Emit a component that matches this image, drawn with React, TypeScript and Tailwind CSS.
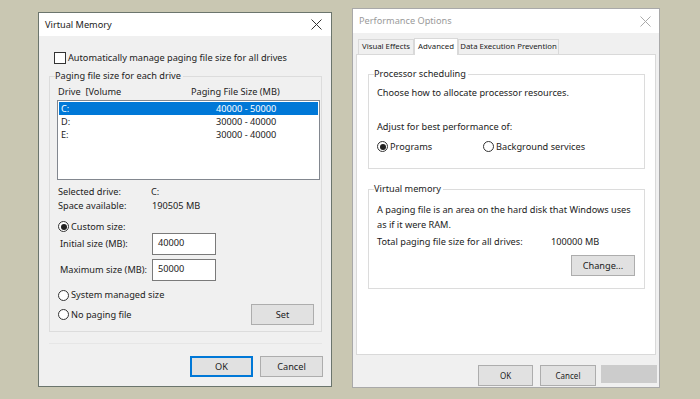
import React from 'react'

const font = { fontFamily: '"Segoe UI", "Noto Sans", "Liberation Sans", sans-serif' }

function Radio({ checked }: { checked?: boolean }) {
  return (
    <span className="w-[11px] h-[11px] rounded-full border border-[#333] bg-white flex items-center justify-center shrink-0">
      {checked && <span className="w-[6px] h-[6px] rounded-full bg-[#222]" />}
    </span>
  )
}

function Button({ label, primary, className = '' }: { label: string; primary?: boolean; className?: string }) {
  return (
    <div
      className={`h-[21px] flex items-center justify-center bg-[#e1e1e1] border ${
        primary ? 'border-[#0078d7] border-2' : 'border-[#adadad]'
      } ${className}`}
    >
      {label}
    </div>
  )
}

function CloseX({ color }: { color: string }) {
  return (
    <svg width="11" height="11" viewBox="0 0 11 11">
      <path d="M0.5 0.5 L10.5 10.5 M10.5 0.5 L0.5 10.5" stroke={color} strokeWidth="1" />
    </svg>
  )
}

const drives = [
  { d: 'C:', size: '40000 - 50000', sel: true },
  { d: 'D:', size: '30000 - 40000' },
  { d: 'E:', size: '30000 - 40000' },
]

function VirtualMemory() {
  return (
    <div className="absolute left-[38px] top-[12px] w-[294px] h-[375px] border border-[#6b756d] bg-[#f0f0f0] flex flex-col">
      {/* Title */}
      <div className="h-[23px] bg-white flex items-center justify-between pl-[6px] pr-[9px] shrink-0">
        <span>Virtual Memory</span>
        <CloseX color="#333" />
      </div>

      <div className="pl-[10px] pr-[9px]">
        {/* Checkbox */}
        <div className="flex items-center gap-[2px] mt-[15px] ml-[5px] h-[13px]">
          <span className="w-[12px] h-[12px] border border-[#333] bg-white shrink-0" />
          <span>Automatically manage paging file size for all drives</span>
        </div>

        {/* Group */}
        <div className="relative mt-[12px] h-[256px] border border-[#dcdcdc] pl-[7px] pr-[1px]">
          <span className="absolute -top-[6px] left-[5px] bg-[#f0f0f0] pr-[2px]">Paging file size for each drive</span>

          <div className="flex h-[12px] items-center mt-[9px] pl-[1px]">
            <span className="w-[133px]">Drive&nbsp; [Volume</span>
            <span>Paging File Size (MB)</span>
          </div>

          <div className="mt-[2px] h-[80px] border border-[#82878f] bg-white pt-[1px] px-[1px]">
            {drives.map((r) => (
              <div
                key={r.d}
                className={`h-[13px] flex items-center pl-[2px] ${r.sel ? 'bg-[#0078d7] text-white' : ''}`}
              >
                <span className="w-[155px]">{r.d}</span>
                <span>{r.size}</span>
              </div>
            ))}
          </div>

          <div className="mt-[5px] pl-[1px]">
            <div className="flex h-[14px] items-center">
              <span className="w-[93px]">Selected drive:</span>
              <span>C:</span>
            </div>
            <div className="flex h-[14px] items-center">
              <span className="w-[94px]">Space available:</span>
              <span>190505 MB</span>
            </div>

            <div className="flex items-center gap-[2px] h-[13px] mt-[7px]">
              <Radio checked />
              <span>Custom size:</span>
            </div>

            <div className="flex items-center h-[22px]">
              <span className="w-[94px] pl-[2px]">Initial size (MB):</span>
              <div className="w-[64px] h-[22px] border border-[#7a7a7a] bg-white pl-[5px] pt-[4px]">40000</div>
            </div>
            <div className="flex items-center h-[22px] mt-[4px]">
              <span className="w-[94px] pl-[2px]">Maximum size (MB):</span>
              <div className="w-[64px] h-[22px] border border-[#7a7a7a] bg-white pl-[5px] pt-[4px]">50000</div>
            </div>

            <div className="flex items-center gap-[2px] h-[14px] mt-[7px]">
              <Radio />
              <span>System managed size</span>
            </div>
            <div className="flex items-center justify-between h-[21px] mt-[2px] pr-[6px]">
              <div className="flex items-center gap-[2px]">
                <Radio />
                <span>No paging file</span>
              </div>
              <Button label="Set" className="w-[63px]" />
            </div>
          </div>
        </div>

        <div className="mt-[11px] border-t border-[#e6e6e6]" />

        <div className="flex justify-end gap-[7px] mt-[12px] -mr-[1px]">
          <Button label="OK" primary className="w-[63px]" />
          <Button label="Cancel" className="w-[63px]" />
        </div>
      </div>
    </div>
  )
}

function PerformanceOptions() {
  return (
    <div className="absolute left-[352px] top-[8px] w-[308px] h-[380px] border border-[#a9a9a9] bg-[#f0f0f0] flex flex-col">
      <div className="h-[24px] bg-white flex items-center justify-between pl-[6px] pr-[8px] shrink-0">
        <span className="text-[#9a9a9a]">Performance Options</span>
        <CloseX color="#aaa" />
      </div>

      <div className="px-[3px] pt-[4px]">
        {/* Tabs */}
        <div className="flex items-end h-[17px] pl-[2px] text-[7.8px]">
          <div className="w-[56px] h-[15px] flex items-center justify-center border border-[#d9d9d9] border-b-0 bg-[#f0f0f0]">Visual Effects</div>
          <div className="w-[44px] h-[17px] flex items-center justify-center border border-[#d9d9d9] border-b-0 bg-white relative top-[1px]">Advanced</div>
          <div className="w-[101px] h-[15px] flex items-center justify-center border border-[#d9d9d9] border-b-0 bg-[#f0f0f0]">Data Execution Prevention</div>
        </div>

        {/* Panel */}
        <div className="h-[301px] border border-[#d9d9d9] bg-white pl-[11px] pr-[10px] pt-[19px]">
          <div className="relative h-[95px] border border-[#dcdcdc] pl-[8px]">
            <span className="absolute -top-[6px] left-[5px] bg-white pr-[2px]">Processor scheduling</span>
            <div className="mt-[13px]">Choose how to allocate processor resources.</div>
            <div className="mt-[25px]">Adjust for best performance of:</div>
            <div className="flex items-center mt-[10px]">
              <div className="flex items-center gap-[2px] w-[106px]">
                <Radio checked />
                <span>Programs</span>
              </div>
              <div className="flex items-center gap-[2px]">
                <Radio />
                <span>Background services</span>
              </div>
            </div>
          </div>

          <div className="relative h-[100px] mt-[20px] border border-[#dcdcdc] pl-[8px] pr-[9px]">
            <span className="absolute -top-[6px] left-[5px] bg-white pr-[2px]">Virtual memory</span>
            <div className="mt-[12px] leading-[15px]">
              A paging file is an area on the hard disk that Windows uses
              <br />
              as if it were RAM.
            </div>
            <div className="flex mt-[5px]">
              <span className="w-[174px]">Total paging file size for all drives:</span>
              <span>100000 MB</span>
            </div>
            <div className="flex justify-end mt-[9px]">
              <Button label="Change..." className="w-[64px]" />
            </div>
          </div>
        </div>

        <div className="flex justify-end mt-[10px] text-[8px] -mr-[1px]">
          <Button label="OK" className="w-[55px] h-[18px]" />
          <Button label="Cancel" className="w-[56px] h-[18px] ml-[7px]" />
          <div className="w-[56px] h-[18px] ml-[5px] bg-[#cccccc]" />
        </div>
      </div>
    </div>
  )
}

export default function App() {
  return (
    <div
      className="relative w-[700px] h-[399px] bg-[#c9c7b2] overflow-hidden text-[9.2px] text-[#222] leading-none whitespace-nowrap"
      style={font}
    >
      <VirtualMemory />
      <PerformanceOptions />
    </div>
  )
}
